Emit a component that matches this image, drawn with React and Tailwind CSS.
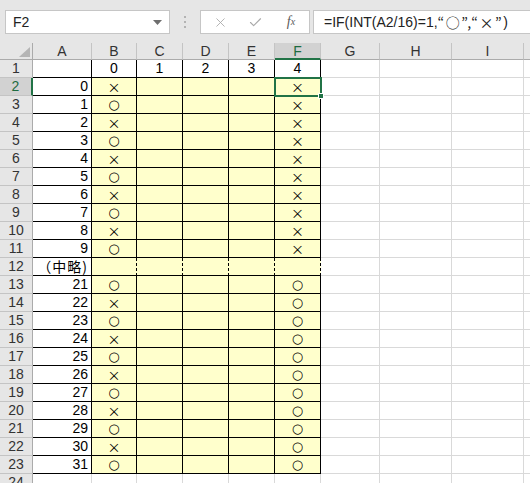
import { X, Check } from 'lucide-react';

const COLS = ['A', 'B', 'C', 'D', 'E', 'F', 'G', 'H', 'I', ''];
const VALUES = [0, 1, 2, 3, 4, 5, 6, 7, 8, 9, null, 21, 22, 23, 24, 25, 26, 27, 28, 29, 30, 31];

const sym = 'font-["Noto_Sans_CJK_JP",sans-serif]';

function ColHeader({ label, active }) {
  return (
    <div
      className={
        active
          ? 'bg-[#d2d2d2] border-r border-r-[#c4c4c4] border-b-2 border-b-[#217346] text-[#1d6b40] text-center leading-[16px]'
          : 'bg-[#e6e6e6] border-r border-b border-[#c4c4c4] border-b-[#ababab] text-[#333] text-center leading-[16px]'
      }
    >
      {label}
    </div>
  );
}

function RowHeader({ n }) {
  const active = n === 2;
  return (
    <div
      className={
        active
          ? 'bg-[#d2d2d2] border-r-2 border-r-[#217346] border-b border-b-[#c4c4c4] text-[#1d6b40] text-center leading-[17px]'
          : 'bg-[#e6e6e6] border-r border-b border-[#c4c4c4] border-r-[#ababab] text-[#333] text-center leading-[17px]'
      }
    >
      {n}
    </div>
  );
}

function Cell({ children, kind = 'grid', align = 'center' }) {
  const base = 'leading-[17px] px-[3px] whitespace-nowrap ';
  const al = align === 'right' ? 'text-right ' : 'text-center ';
  let cls = 'bg-white border-r border-b border-[#d9d9d9] ';
  if (kind === 'white') cls = 'bg-white border-r border-b border-black ';
  if (kind === 'yellow') cls = 'bg-[#ffffcc] border-r border-b border-black ';
  if (kind === 'dashed') cls = 'bg-[#ffffcc] border-r border-b border-black [border-right-style:dashed] ';
  return <div className={base + al + cls}>{children}</div>;
}

function Mark({ v }) {
  if (v === '○') {
    return <span className="font-['DejaVu_Sans',sans-serif] text-[13px] leading-[17px]">{v}</span>;
  }
  return <span className={sym + ' text-[13px] leading-[17px]'}>{v}</span>;
}

function Row({ n }) {
  const cells = [];
  if (n === 1) {
    cells.push(<Cell key="a" kind="white" />);
    [0, 1, 2, 3, 4].forEach((v) => cells.push(<Cell key={v} kind="white">{v}</Cell>));
  } else if (n >= 2 && n <= 23) {
    const a = VALUES[n - 2];
    if (a === null) {
      cells.push(
        <Cell key="a" kind="white" align="right">
          <span className={sym + ' text-[14px] leading-[17px] tracking-[1px]'}>（中略)</span>
        </Cell>
      );
      for (let i = 0; i < 5; i++) cells.push(<Cell key={i} kind="dashed" />);
    } else {
      cells.push(<Cell key="a" kind="white" align="right">{a}</Cell>);
      cells.push(
        <Cell key="b" kind="yellow">
          <Mark v={a % 2 === 1 ? '○' : '×'} />
        </Cell>
      );
      cells.push(<Cell key="c" kind="yellow" />);
      cells.push(<Cell key="d" kind="yellow" />);
      cells.push(<Cell key="e" kind="yellow" />);
      cells.push(
        <Cell key="f" kind="yellow">
          <Mark v={Math.floor(a / 16) === 1 ? '○' : '×'} />
        </Cell>
      );
    }
  } else {
    for (let i = 0; i < 6; i++) cells.push(<Cell key={i} />);
  }
  for (let i = 0; i < 4; i++) cells.push(<Cell key={'g' + i} />);
  return (
    <>
      <RowHeader n={n} />
      {cells}
    </>
  );
}

export default function App() {
  const rows = Array.from({ length: 24 }, (_, i) => i + 1);
  return (
    <div className="w-[530px] h-[483px] overflow-hidden bg-white text-[14px] text-black font-['Liberation_Sans','Noto_Sans_CJK_JP',sans-serif]">
      {/* formula bar */}
      <div className="h-[43px] bg-[#e6e6e6] flex items-start pt-[10px] pl-[5px]">
        <div className="w-[165px] h-[24px] bg-white border border-[#c6c6c6] flex items-center pl-[7px] pr-[6px]">
          <span className="flex-1 text-[#222]">F2</span>
          <svg width="9" height="5" viewBox="0 0 9 5" className="mr-[1px]">
            <path d="M0 0 L9 0 L4.5 5 Z" fill="#6e6e6e" />
          </svg>
        </div>
        <div className="w-[30px] h-[24px] flex flex-col items-center justify-center gap-[3px]">
          <span className="w-[2px] h-[2px] bg-[#b3b3b3]" />
          <span className="w-[2px] h-[2px] bg-[#b3b3b3]" />
          <span className="w-[2px] h-[2px] bg-[#b3b3b3]" />
        </div>
        <div className="w-[110px] h-[24px] bg-white border border-[#c6c6c6] flex items-center">
          <span className="w-[36px] flex justify-center pl-[2px]">
            <X size={15} strokeWidth={1.4} color="#a9a9a9" />
          </span>
          <span className="w-[36px] flex justify-center">
            <Check size={15} strokeWidth={1.8} color="#a9a9a9" />
          </span>
          <span className="w-[36px] flex justify-center text-[#5a5a5a] italic font-['Liberation_Serif',serif] text-[14px] leading-none">
            f<span className="text-[10px] relative top-[2px]">x</span>
          </span>
        </div>
        <div className="ml-[3px] flex-1 h-[24px] bg-white border border-r-0 border-[#c6c6c6] flex items-center pl-[10px] text-[#222] whitespace-nowrap">
          =IF(INT(A2/16)=1,<span className={sym + ' tracking-[1.5px]'}>“○”,“×”</span>)
        </div>
      </div>

      {/* sheet */}
      <div className="relative grid grid-cols-[33px_59px_45px_46px_46px_46px_46px_59px_72px_72px_1fr] grid-rows-[17px_repeat(24,18px)]">
        <div className="bg-[#e6e6e6] border-r border-b border-[#ababab] flex items-end justify-end pr-[2px] pb-[2px]">
          <svg width="11" height="10" viewBox="0 0 11 10">
            <path d="M11 0 L11 10 L0 10 Z" fill="#b5b5b5" />
          </svg>
        </div>
        {COLS.map((c, i) => (
          <ColHeader key={i} label={c} active={c === 'F'} />
        ))}
        {rows.map((n) => (
          <Row key={n} n={n} />
        ))}

        {/* active cell F2 */}
        <div className="absolute left-[274px] top-[34px] w-[48px] h-[20px] border-2 border-[#217346] pointer-events-none" />
        <div className="absolute left-[318px] top-[50px] w-[6px] h-[6px] bg-[#217346] border border-white pointer-events-none" />
      </div>
    </div>
  );
}
